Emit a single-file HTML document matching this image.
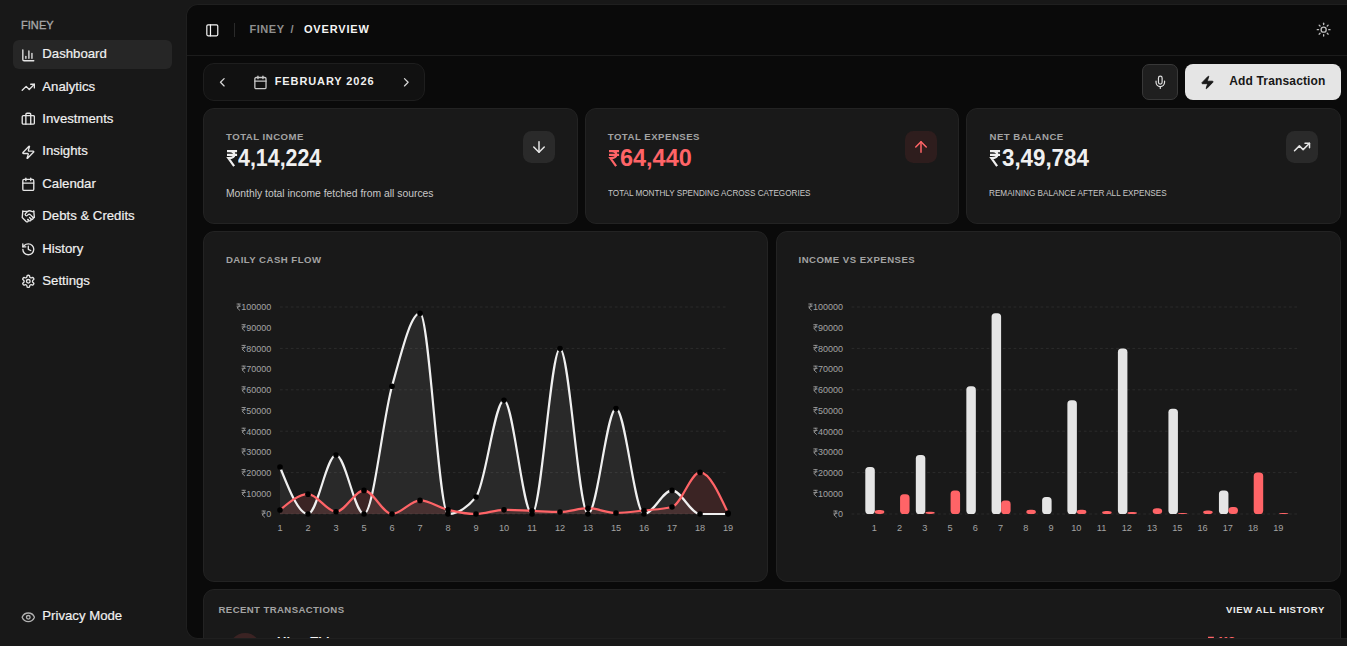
<!DOCTYPE html>
<html><head><meta charset="utf-8"><title>Finey</title>
<style>
*{margin:0;padding:0;box-sizing:border-box}
html,body{width:1347px;height:646px;overflow:hidden;background:#181818;font-family:"Liberation Sans", sans-serif}
.t{position:absolute;white-space:nowrap}
.ic{position:absolute;display:block}
.box{position:absolute}
.card{position:absolute;background:#191919;border:1px solid #232323;border-radius:11px}
#main{position:absolute;left:186px;top:4px;width:1162px;height:635px;background:#0a0a0a;border:1px solid #1f1f1f;border-right:none;border-radius:12px 0 0 12px;overflow:hidden}
#inner{position:absolute;left:1px;top:1px;width:1160px;height:633px}
.charts{position:absolute;left:0;top:0}
</style></head><body>
<div class="t" style="left:20.90px;top:19.89px;font-size:11px;line-height:11px;color:#a8a8a8;font-weight:400;letter-spacing:0.1px;-webkit-text-stroke:0.35px #a8a8a8;">FINEY</div><div class="box" style="left:13px;top:40px;width:159px;height:29px;border-radius:6px;background:#262626"></div><svg class="ic" style="left:20.70px;top:47.60px" width="14.6" height="14.6" viewBox="0 0 24 24" fill="none" stroke="#e5e5e5" stroke-width="2.2" stroke-linecap="round" stroke-linejoin="round"><path d="M3 3v16a2 2 0 0 0 2 2h16"/><path d="M18 17V9"/><path d="M13 17V5"/><path d="M8 17v-3"/></svg><div class="t" style="left:42.30px;top:47.43px;font-size:13.2px;line-height:13.2px;color:#f0f0f0;font-weight:400;letter-spacing:0px;-webkit-text-stroke:0.2px #f0f0f0;">Dashboard</div><svg class="ic" style="left:20.70px;top:79.95px" width="14.6" height="14.6" viewBox="0 0 24 24" fill="none" stroke="#e5e5e5" stroke-width="2.2" stroke-linecap="round" stroke-linejoin="round"><polyline points="22 7 13.5 15.5 8.5 10.5 2 17"/><polyline points="16 7 22 7 22 13"/></svg><div class="t" style="left:42.30px;top:79.78px;font-size:13.2px;line-height:13.2px;color:#f0f0f0;font-weight:400;letter-spacing:0px;-webkit-text-stroke:0.2px #f0f0f0;">Analytics</div><svg class="ic" style="left:20.70px;top:112.30px" width="14.6" height="14.6" viewBox="0 0 24 24" fill="none" stroke="#e5e5e5" stroke-width="2.2" stroke-linecap="round" stroke-linejoin="round"><path d="M16 20V4a2 2 0 0 0-2-2h-4a2 2 0 0 0-2 2v16"/><rect width="20" height="14" x="2" y="6" rx="2"/></svg><div class="t" style="left:42.30px;top:112.13px;font-size:13.2px;line-height:13.2px;color:#f0f0f0;font-weight:400;letter-spacing:0px;-webkit-text-stroke:0.2px #f0f0f0;">Investments</div><svg class="ic" style="left:20.70px;top:144.65px" width="14.6" height="14.6" viewBox="0 0 24 24" fill="none" stroke="#e5e5e5" stroke-width="2.2" stroke-linecap="round" stroke-linejoin="round"><path d="M4 14a1 1 0 0 1-.78-1.63l9.9-10.2a.5.5 0 0 1 .86.46l-1.92 6.02A1 1 0 0 0 13 10h7a1 1 0 0 1 .78 1.63l-9.9 10.2a.5.5 0 0 1-.86-.46l1.92-6.02A1 1 0 0 0 11 14z"/></svg><div class="t" style="left:42.30px;top:144.48px;font-size:13.2px;line-height:13.2px;color:#f0f0f0;font-weight:400;letter-spacing:0px;-webkit-text-stroke:0.2px #f0f0f0;">Insights</div><svg class="ic" style="left:20.70px;top:177.00px" width="14.6" height="14.6" viewBox="0 0 24 24" fill="none" stroke="#e5e5e5" stroke-width="2.2" stroke-linecap="round" stroke-linejoin="round"><path d="M8 2v4"/><path d="M16 2v4"/><rect width="18" height="18" x="3" y="4" rx="2"/><path d="M3 10h18"/></svg><div class="t" style="left:42.30px;top:176.83px;font-size:13.2px;line-height:13.2px;color:#f0f0f0;font-weight:400;letter-spacing:0px;-webkit-text-stroke:0.2px #f0f0f0;">Calendar</div><svg class="ic" style="left:20.70px;top:209.35px" width="14.6" height="14.6" viewBox="0 0 24 24" fill="none" stroke="#e5e5e5" stroke-width="2.2" stroke-linecap="round" stroke-linejoin="round"><path d="m11 17 2 2a1 1 0 1 0 3-3"/><path d="m14 14 2.5 2.5a1 1 0 1 0 3-3l-3.88-3.88a3 3 0 0 0-4.24 0l-.88.88a1 1 0 1 1-3-3l2.81-2.81a5.79 5.79 0 0 1 7.06-.87l.47.28a2 2 0 0 0 1.42.25L21 4"/><path d="m21 3 1 11h-2"/><path d="M3 3 2 14l6.47 6.47a1 1 0 0 0 3-3"/><path d="M3 4h8"/></svg><div class="t" style="left:42.30px;top:209.18px;font-size:13.2px;line-height:13.2px;color:#f0f0f0;font-weight:400;letter-spacing:0px;-webkit-text-stroke:0.2px #f0f0f0;">Debts &amp; Credits</div><svg class="ic" style="left:20.70px;top:241.70px" width="14.6" height="14.6" viewBox="0 0 24 24" fill="none" stroke="#e5e5e5" stroke-width="2.2" stroke-linecap="round" stroke-linejoin="round"><path d="M3 12a9 9 0 1 0 9-9 9.75 9.75 0 0 0-6.74 2.74L3 8"/><path d="M3 3v5h5"/><path d="M12 7v5l4 2"/></svg><div class="t" style="left:42.30px;top:241.53px;font-size:13.2px;line-height:13.2px;color:#f0f0f0;font-weight:400;letter-spacing:0px;-webkit-text-stroke:0.2px #f0f0f0;">History</div><svg class="ic" style="left:20.70px;top:274.05px" width="14.6" height="14.6" viewBox="0 0 24 24" fill="none" stroke="#e5e5e5" stroke-width="2.2" stroke-linecap="round" stroke-linejoin="round"><path d="M12.22 2h-.44a2 2 0 0 0-2 2v.18a2 2 0 0 1-1 1.73l-.43.25a2 2 0 0 1-2 0l-.15-.08a2 2 0 0 0-2.73.73l-.22.38a2 2 0 0 0 .73 2.73l.15.1a2 2 0 0 1 1 1.72v.51a2 2 0 0 1-1 1.74l-.15.09a2 2 0 0 0-.73 2.73l.22.38a2 2 0 0 0 2.73.73l.15-.08a2 2 0 0 1 2 0l.43.25a2 2 0 0 1 1 1.73V20a2 2 0 0 0 2 2h.44a2 2 0 0 0 2-2v-.18a2 2 0 0 1 1-1.73l.43-.25a2 2 0 0 1 2 0l.15.08a2 2 0 0 0 2.73-.73l.22-.39a2 2 0 0 0-.73-2.73l-.15-.08a2 2 0 0 1-1-1.74v-.5a2 2 0 0 1 1-1.74l.15-.09a2 2 0 0 0 .73-2.73l-.22-.38a2 2 0 0 0-2.73-.73l-.15.08a2 2 0 0 1-2 0l-.43-.25a2 2 0 0 1-1-1.73V4a2 2 0 0 0-2-2z"/><circle cx="12" cy="12" r="3"/></svg><div class="t" style="left:42.30px;top:273.88px;font-size:13.2px;line-height:13.2px;color:#f0f0f0;font-weight:400;letter-spacing:0px;-webkit-text-stroke:0.2px #f0f0f0;">Settings</div><svg class="ic" style="left:20.70px;top:609.60px" width="14.6" height="14.6" viewBox="0 0 24 24" fill="none" stroke="#b0b0b0" stroke-width="2.2" stroke-linecap="round" stroke-linejoin="round"><path d="M2.062 12.348a1 1 0 0 1 0-.696 10.75 10.75 0 0 1 19.876 0 1 1 0 0 1 0 .696 10.75 10.75 0 0 1-19.876 0"/><circle cx="12" cy="12" r="3"/></svg><div class="t" style="left:42.30px;top:609.43px;font-size:13.2px;line-height:13.2px;color:#f0f0f0;font-weight:400;letter-spacing:0px;-webkit-text-stroke:0.2px #f0f0f0;">Privacy Mode</div>
<div id="main"><div id="inner" style="left:0;top:0">
<svg class="ic" style="left:17.70px;top:17.55px" width="14.6" height="14.6" viewBox="0 0 24 24" fill="none" stroke="#f5f5f5" stroke-width="2" stroke-linecap="round" stroke-linejoin="round"><rect width="18" height="18" x="3" y="3" rx="2"/><path d="M9 3v18"/></svg><div class="box" style="left:47px;top:18px;width:1px;height:14px;background:#2a2a2a"></div><div class="t" style="left:62.40px;top:18.69px;font-size:11px;line-height:11px;color:#8f8f8f;font-weight:700;letter-spacing:0.55px;">FINEY</div><div class="t" style="left:103.40px;top:18.69px;font-size:11px;line-height:11px;color:#8f8f8f;font-weight:700;letter-spacing:0px;">/</div><div class="t" style="left:116.90px;top:18.69px;font-size:11px;line-height:11px;color:#f5f5f5;font-weight:700;letter-spacing:0.85px;">OVERVIEW</div><svg class="ic" style="left:1129.45px;top:17.45px" width="15.3" height="15.3" viewBox="0 0 24 24" fill="none" stroke="#bdbdbd" stroke-width="2.1" stroke-linecap="round" stroke-linejoin="round"><circle cx="12" cy="12" r="4"/><path d="M12 2v2"/><path d="M12 20v2"/><path d="m4.93 4.93 1.41 1.41"/><path d="m17.66 17.66 1.41 1.41"/><path d="M2 12h2"/><path d="M20 12h2"/><path d="m6.34 17.66-1.41 1.41"/><path d="m19.07 4.93-1.41 1.41"/></svg><div class="box" style="left:0;top:50px;width:1160px;height:1px;background:#1c1c1c"></div><div class="box" style="left:16px;top:58px;width:222px;height:38px;border-radius:11px;background:#111111;border:1px solid #1e1e1e;box-sizing:border-box"></div><svg class="ic" style="left:28.00px;top:70.10px" width="14.6" height="14.6" viewBox="0 0 24 24" fill="none" stroke="#d4d4d4" stroke-width="2.1" stroke-linecap="round" stroke-linejoin="round"><path d="m15 18-6-6 6-6"/></svg><svg class="ic" style="left:65.55px;top:69.75px" width="14.9" height="14.9" viewBox="0 0 24 24" fill="none" stroke="#c8c8c8" stroke-width="2.1" stroke-linecap="round" stroke-linejoin="round"><path d="M8 2v4"/><path d="M16 2v4"/><rect width="18" height="18" x="3" y="4" rx="2"/><path d="M3 10h18"/></svg><div class="t" style="left:87.70px;top:70.89px;font-size:11px;line-height:11px;color:#f0f0f0;font-weight:700;letter-spacing:0.9px;">FEBRUARY 2026</div><svg class="ic" style="left:212.10px;top:70.40px" width="14.6" height="14.6" viewBox="0 0 24 24" fill="none" stroke="#d4d4d4" stroke-width="2.1" stroke-linecap="round" stroke-linejoin="round"><path d="m9 18 6-6-6-6"/></svg><div class="box" style="left:955px;top:59px;width:36px;height:36px;border-radius:7px;background:#1f1f1f;border:1px solid #383838;box-sizing:border-box"></div><svg class="ic" style="left:966.00px;top:70.20px" width="14.6" height="14.6" viewBox="0 0 24 24" fill="none" stroke="#e0e0e0" stroke-width="2" stroke-linecap="round" stroke-linejoin="round"><path d="M12 19v3"/><path d="M19 10v2a7 7 0 0 1-14 0v-2"/><rect x="9" y="2" width="6" height="13" rx="3"/></svg><div class="box" style="left:998px;top:59px;width:156px;height:36px;border-radius:8px;background:#e5e5e5"></div><svg class="ic" style="left:1012.65px;top:70.05px" width="14.9" height="14.9" viewBox="0 0 24 24" fill="#1a1a1a" stroke="#1a1a1a" stroke-width="1.5" stroke-linecap="round" stroke-linejoin="round"><path d="M4 14a1 1 0 0 1-.78-1.63l9.9-10.2a.5.5 0 0 1 .86.46l-1.92 6.02A1 1 0 0 0 13 10h7a1 1 0 0 1 .78 1.63l-9.9 10.2a.5.5 0 0 1-.86-.46l1.92-6.02A1 1 0 0 0 11 14z"/></svg><div class="t" style="left:1042.30px;top:69.74px;font-size:12px;line-height:12px;color:#171717;font-weight:700;letter-spacing:0.15px;">Add Transaction</div><div class="card" style="left:16.00px;top:103.2px;width:374.53px;height:116px"></div><div class="t" style="left:39.00px;top:126.67px;font-size:9.6px;line-height:9.6px;color:#a3a3a3;font-weight:700;letter-spacing:0.5px;">TOTAL INCOME</div><svg class="ic" style="left:39.80px;top:144.60px;overflow:visible" width="10.08" height="16.30" viewBox="0 0 10.2 16.5"><path d="M0 1.1H10.2M0 4.9H10.2M3 1.1C6.6 1.1 7.4 3 7.4 4.9C7.4 7 5.6 8.3 1.4 8.3L7.2 16.3" fill="none" stroke="#f0f0f0" stroke-width="2.23" stroke-linecap="butt" stroke-linejoin="miter"/></svg><div class="t" style="left:51.10px;top:141.83px;font-size:23px;line-height:23px;color:#f0f0f0;font-weight:700;letter-spacing:0px;transform:scaleX(0.93);transform-origin:0 0;">4,14,224</div><div class="t" style="left:39.00px;top:183.09px;font-size:11px;line-height:11px;color:#c8c8c8;font-weight:400;letter-spacing:0px;transform:scaleX(0.94);transform-origin:0 0;">Monthly total income fetched from all sources</div><div class="box" style="left:335.83px;top:125.9px;width:32.2px;height:32.2px;border-radius:8.5px;background:#2a2a2a"></div><svg class="ic" style="left:342.93px;top:133.00px" width="18" height="18" viewBox="0 0 24 24" fill="none" stroke="#e5e5e5" stroke-width="2" stroke-linecap="round" stroke-linejoin="round"><path d="M12 5v14"/><path d="m19 12-7 7-7-7"/></svg><div class="card" style="left:397.73px;top:103.2px;width:374.53px;height:116px"></div><div class="t" style="left:420.73px;top:126.67px;font-size:9.6px;line-height:9.6px;color:#a3a3a3;font-weight:700;letter-spacing:0.5px;">TOTAL EXPENSES</div><svg class="ic" style="left:421.53px;top:144.60px;overflow:visible" width="10.08" height="16.30" viewBox="0 0 10.2 16.5"><path d="M0 1.1H10.2M0 4.9H10.2M3 1.1C6.6 1.1 7.4 3 7.4 4.9C7.4 7 5.6 8.3 1.4 8.3L7.2 16.3" fill="none" stroke="#ff6467" stroke-width="2.23" stroke-linecap="butt" stroke-linejoin="miter"/></svg><div class="t" style="left:432.83px;top:141.83px;font-size:23px;line-height:23px;color:#ff6467;font-weight:700;letter-spacing:0px;transform:scaleX(1.02);transform-origin:0 0;">64,440</div><div class="t" style="left:420.73px;top:183.30px;font-size:9.8px;line-height:9.8px;color:#c8c8c8;font-weight:400;letter-spacing:0px;transform:scaleX(0.831);transform-origin:0 0;">TOTAL MONTHLY SPENDING ACROSS CATEGORIES</div><div class="box" style="left:717.57px;top:125.9px;width:32.2px;height:32.2px;border-radius:8.5px;background:#2e1d1d"></div><svg class="ic" style="left:724.67px;top:133.00px" width="18" height="18" viewBox="0 0 24 24" fill="none" stroke="#ff6467" stroke-width="2" stroke-linecap="round" stroke-linejoin="round"><path d="m5 12 7-7 7 7"/><path d="M12 19V5"/></svg><div class="card" style="left:779.47px;top:103.2px;width:374.53px;height:116px"></div><div class="t" style="left:802.47px;top:126.67px;font-size:9.6px;line-height:9.6px;color:#a3a3a3;font-weight:700;letter-spacing:0.5px;">NET BALANCE</div><svg class="ic" style="left:803.27px;top:144.60px;overflow:visible" width="10.08" height="16.30" viewBox="0 0 10.2 16.5"><path d="M0 1.1H10.2M0 4.9H10.2M3 1.1C6.6 1.1 7.4 3 7.4 4.9C7.4 7 5.6 8.3 1.4 8.3L7.2 16.3" fill="none" stroke="#f0f0f0" stroke-width="2.23" stroke-linecap="butt" stroke-linejoin="miter"/></svg><div class="t" style="left:814.57px;top:141.83px;font-size:23px;line-height:23px;color:#f0f0f0;font-weight:700;letter-spacing:0px;transform:scaleX(0.97);transform-origin:0 0;">3,49,784</div><div class="t" style="left:802.47px;top:183.30px;font-size:9.8px;line-height:9.8px;color:#c8c8c8;font-weight:400;letter-spacing:0px;transform:scaleX(0.834);transform-origin:0 0;">REMAINING BALANCE AFTER ALL EXPENSES</div><div class="box" style="left:1099.30px;top:125.9px;width:32.2px;height:32.2px;border-radius:8.5px;background:#2a2a2a"></div><svg class="ic" style="left:1106.40px;top:133.00px" width="18" height="18" viewBox="0 0 24 24" fill="none" stroke="#e5e5e5" stroke-width="2" stroke-linecap="round" stroke-linejoin="round"><polyline points="22 7 13.5 15.5 8.5 10.5 2 17"/><polyline points="16 7 22 7 22 13"/></svg><div class="card" style="left:16.00px;top:225.9px;width:565.40px;height:351px"></div><div class="t" style="left:38.90px;top:249.67px;font-size:9.6px;line-height:9.6px;color:#a3a3a3;font-weight:700;letter-spacing:0.47px;">DAILY CASH FLOW</div><div class="card" style="left:588.60px;top:225.9px;width:565.40px;height:351px"></div><div class="t" style="left:611.50px;top:249.67px;font-size:9.6px;line-height:9.6px;color:#a3a3a3;font-weight:700;letter-spacing:0.47px;">INCOME VS EXPENSES</div><div class="card" style="left:16px;top:584.1px;width:1138px;height:80px"></div><div class="t" style="left:31.50px;top:600.37px;font-size:9.6px;line-height:9.6px;color:#a3a3a3;font-weight:700;letter-spacing:0.4px;">RECENT TRANSACTIONS</div><div class="t" style="left:1039.10px;top:600.47px;font-size:9.6px;line-height:9.6px;color:#ececec;font-weight:700;letter-spacing:0.54px;">VIEW ALL HISTORY</div><div class="box" style="left:42px;top:627.8px;width:32px;height:32px;border-radius:50%;background:#3b2323"></div><div class="t" style="left:90.00px;top:630.30px;font-size:13px;line-height:13px;color:#f5f5f5;font-weight:700;letter-spacing:0px;">Uber Thin</div><svg class="ic" style="left:1021.00px;top:631.80px;overflow:visible" width="5.87" height="9.50" viewBox="0 0 10.2 16.5"><path d="M0 1.1H10.2M0 4.9H10.2M3 1.1C6.6 1.1 7.4 3 7.4 4.9C7.4 7 5.6 8.3 1.4 8.3L7.2 16.3" fill="none" stroke="#ff6467" stroke-width="2.78" stroke-linecap="butt" stroke-linejoin="miter"/></svg><div class="t" style="left:1030.60px;top:630.67px;font-size:11.5px;line-height:11.5px;color:#ff6467;font-weight:700;letter-spacing:-0.6px;">118</div>
</div></div>
<svg class="charts" width="1347" height="646" viewBox="0 0 1347 646" style="font-family:"Liberation Sans", sans-serif"><line x1="280" x2="728" y1="514.00" y2="514.00" stroke="#2e2e2e" stroke-dasharray="2.7 2.7" stroke-width="0.9"/><line x1="280" x2="728" y1="472.60" y2="472.60" stroke="#2e2e2e" stroke-dasharray="2.7 2.7" stroke-width="0.9"/><line x1="280" x2="728" y1="431.20" y2="431.20" stroke="#2e2e2e" stroke-dasharray="2.7 2.7" stroke-width="0.9"/><line x1="280" x2="728" y1="389.80" y2="389.80" stroke="#2e2e2e" stroke-dasharray="2.7 2.7" stroke-width="0.9"/><line x1="280" x2="728" y1="348.40" y2="348.40" stroke="#2e2e2e" stroke-dasharray="2.7 2.7" stroke-width="0.9"/><line x1="280" x2="728" y1="307.00" y2="307.00" stroke="#2e2e2e" stroke-dasharray="2.7 2.7" stroke-width="0.9"/><text x="271.2" y="517.30" text-anchor="end" font-size="9" fill="#a3a3a3">0</text><path transform="translate(261.60,510.50)" d="M0 0.5H4.2M0 2.7H4.2M1.6 0.5C3.3 0.5 3.3 4.2 0.4 4.2L3.4 7" fill="none" stroke="#a3a3a3" stroke-width="0.85"/><text x="271.2" y="496.60" text-anchor="end" font-size="9" fill="#a3a3a3">10000</text><path transform="translate(241.58,489.80)" d="M0 0.5H4.2M0 2.7H4.2M1.6 0.5C3.3 0.5 3.3 4.2 0.4 4.2L3.4 7" fill="none" stroke="#a3a3a3" stroke-width="0.85"/><text x="271.2" y="475.90" text-anchor="end" font-size="9" fill="#a3a3a3">20000</text><path transform="translate(241.58,469.10)" d="M0 0.5H4.2M0 2.7H4.2M1.6 0.5C3.3 0.5 3.3 4.2 0.4 4.2L3.4 7" fill="none" stroke="#a3a3a3" stroke-width="0.85"/><text x="271.2" y="455.20" text-anchor="end" font-size="9" fill="#a3a3a3">30000</text><path transform="translate(241.58,448.40)" d="M0 0.5H4.2M0 2.7H4.2M1.6 0.5C3.3 0.5 3.3 4.2 0.4 4.2L3.4 7" fill="none" stroke="#a3a3a3" stroke-width="0.85"/><text x="271.2" y="434.50" text-anchor="end" font-size="9" fill="#a3a3a3">40000</text><path transform="translate(241.58,427.70)" d="M0 0.5H4.2M0 2.7H4.2M1.6 0.5C3.3 0.5 3.3 4.2 0.4 4.2L3.4 7" fill="none" stroke="#a3a3a3" stroke-width="0.85"/><text x="271.2" y="413.80" text-anchor="end" font-size="9" fill="#a3a3a3">50000</text><path transform="translate(241.58,407.00)" d="M0 0.5H4.2M0 2.7H4.2M1.6 0.5C3.3 0.5 3.3 4.2 0.4 4.2L3.4 7" fill="none" stroke="#a3a3a3" stroke-width="0.85"/><text x="271.2" y="393.10" text-anchor="end" font-size="9" fill="#a3a3a3">60000</text><path transform="translate(241.58,386.30)" d="M0 0.5H4.2M0 2.7H4.2M1.6 0.5C3.3 0.5 3.3 4.2 0.4 4.2L3.4 7" fill="none" stroke="#a3a3a3" stroke-width="0.85"/><text x="271.2" y="372.40" text-anchor="end" font-size="9" fill="#a3a3a3">70000</text><path transform="translate(241.58,365.60)" d="M0 0.5H4.2M0 2.7H4.2M1.6 0.5C3.3 0.5 3.3 4.2 0.4 4.2L3.4 7" fill="none" stroke="#a3a3a3" stroke-width="0.85"/><text x="271.2" y="351.70" text-anchor="end" font-size="9" fill="#a3a3a3">80000</text><path transform="translate(241.58,344.90)" d="M0 0.5H4.2M0 2.7H4.2M1.6 0.5C3.3 0.5 3.3 4.2 0.4 4.2L3.4 7" fill="none" stroke="#a3a3a3" stroke-width="0.85"/><text x="271.2" y="331.00" text-anchor="end" font-size="9" fill="#a3a3a3">90000</text><path transform="translate(241.58,324.20)" d="M0 0.5H4.2M0 2.7H4.2M1.6 0.5C3.3 0.5 3.3 4.2 0.4 4.2L3.4 7" fill="none" stroke="#a3a3a3" stroke-width="0.85"/><text x="271.2" y="310.30" text-anchor="end" font-size="9" fill="#a3a3a3">100000</text><path transform="translate(236.58,303.50)" d="M0 0.5H4.2M0 2.7H4.2M1.6 0.5C3.3 0.5 3.3 4.2 0.4 4.2L3.4 7" fill="none" stroke="#a3a3a3" stroke-width="0.85"/><text x="280" y="530.6" text-anchor="middle" font-size="9.2" fill="#a3a3a3">1</text><text x="308" y="530.6" text-anchor="middle" font-size="9.2" fill="#a3a3a3">2</text><text x="336" y="530.6" text-anchor="middle" font-size="9.2" fill="#a3a3a3">3</text><text x="364" y="530.6" text-anchor="middle" font-size="9.2" fill="#a3a3a3">5</text><text x="392" y="530.6" text-anchor="middle" font-size="9.2" fill="#a3a3a3">6</text><text x="420" y="530.6" text-anchor="middle" font-size="9.2" fill="#a3a3a3">7</text><text x="448" y="530.6" text-anchor="middle" font-size="9.2" fill="#a3a3a3">8</text><text x="476" y="530.6" text-anchor="middle" font-size="9.2" fill="#a3a3a3">9</text><text x="504" y="530.6" text-anchor="middle" font-size="9.2" fill="#a3a3a3">10</text><text x="532" y="530.6" text-anchor="middle" font-size="9.2" fill="#a3a3a3">11</text><text x="560" y="530.6" text-anchor="middle" font-size="9.2" fill="#a3a3a3">12</text><text x="588" y="530.6" text-anchor="middle" font-size="9.2" fill="#a3a3a3">13</text><text x="616" y="530.6" text-anchor="middle" font-size="9.2" fill="#a3a3a3">15</text><text x="644" y="530.6" text-anchor="middle" font-size="9.2" fill="#a3a3a3">16</text><text x="672" y="530.6" text-anchor="middle" font-size="9.2" fill="#a3a3a3">17</text><text x="700" y="530.6" text-anchor="middle" font-size="9.2" fill="#a3a3a3">18</text><text x="728" y="530.6" text-anchor="middle" font-size="9.2" fill="#a3a3a3">19</text><path d="M280.00,467.01 C289.33,490.51 298.67,514.00 308.00,514.00 C317.33,514.00 326.67,455.00 336.00,455.00 C345.33,455.00 354.67,514.00 364.00,514.00 C373.33,514.00 382.67,419.75 392.00,386.28 C401.33,352.82 410.67,313.21 420.00,313.21 C429.33,313.21 438.67,514.00 448.00,514.00 C457.33,514.00 466.67,508.34 476.00,497.03 C485.33,485.71 494.67,400.36 504.00,400.36 C513.33,400.36 522.67,514.00 532.00,514.00 C541.33,514.00 550.67,348.61 560.00,348.61 C569.33,348.61 578.67,514.00 588.00,514.00 C597.33,514.00 606.67,408.64 616.00,408.64 C625.33,408.64 634.67,514.00 644.00,514.00 C653.33,514.00 662.67,490.40 672.00,490.40 C681.33,490.40 690.67,514.00 700.00,514.00 C709.33,514.00 718.67,514.00 728.00,514.00 L728,514 L280,514 Z" fill="#ffffff" fill-opacity="0.07"/><path d="M280.00,510.07 C289.33,502.10 298.67,494.13 308.00,494.13 C317.33,494.13 326.67,511.72 336.00,511.72 C345.33,511.72 354.67,490.40 364.00,490.40 C373.33,490.40 382.67,514.00 392.00,514.00 C401.33,514.00 410.67,500.40 420.00,500.40 C429.33,500.40 438.67,507.59 448.00,509.86 C457.33,512.13 466.67,514.00 476.00,514.00 C485.33,514.00 494.67,509.86 504.00,509.86 C513.33,509.86 522.67,510.55 532.00,510.89 C541.33,511.24 550.67,511.93 560.00,511.93 C569.33,511.93 578.67,508.20 588.00,508.20 C597.33,508.20 606.67,512.97 616.00,512.97 C625.33,512.97 634.67,511.48 644.00,510.48 C653.33,509.48 662.67,509.31 672.00,506.96 C681.33,504.62 690.67,472.39 700.00,472.39 C709.33,472.39 718.67,492.68 728.00,512.97 L728,514 L280,514 Z" fill="#ff6467" fill-opacity="0.15"/><path d="M280.00,467.01 C289.33,490.51 298.67,514.00 308.00,514.00 C317.33,514.00 326.67,455.00 336.00,455.00 C345.33,455.00 354.67,514.00 364.00,514.00 C373.33,514.00 382.67,419.75 392.00,386.28 C401.33,352.82 410.67,313.21 420.00,313.21 C429.33,313.21 438.67,514.00 448.00,514.00 C457.33,514.00 466.67,508.34 476.00,497.03 C485.33,485.71 494.67,400.36 504.00,400.36 C513.33,400.36 522.67,514.00 532.00,514.00 C541.33,514.00 550.67,348.61 560.00,348.61 C569.33,348.61 578.67,514.00 588.00,514.00 C597.33,514.00 606.67,408.64 616.00,408.64 C625.33,408.64 634.67,514.00 644.00,514.00 C653.33,514.00 662.67,490.40 672.00,490.40 C681.33,490.40 690.67,514.00 700.00,514.00 C709.33,514.00 718.67,514.00 728.00,514.00" fill="none" stroke="#f0f0f0" stroke-width="2.2"/><path d="M280.00,510.07 C289.33,502.10 298.67,494.13 308.00,494.13 C317.33,494.13 326.67,511.72 336.00,511.72 C345.33,511.72 354.67,490.40 364.00,490.40 C373.33,490.40 382.67,514.00 392.00,514.00 C401.33,514.00 410.67,500.40 420.00,500.40 C429.33,500.40 438.67,507.59 448.00,509.86 C457.33,512.13 466.67,514.00 476.00,514.00 C485.33,514.00 494.67,509.86 504.00,509.86 C513.33,509.86 522.67,510.55 532.00,510.89 C541.33,511.24 550.67,511.93 560.00,511.93 C569.33,511.93 578.67,508.20 588.00,508.20 C597.33,508.20 606.67,512.97 616.00,512.97 C625.33,512.97 634.67,511.48 644.00,510.48 C653.33,509.48 662.67,509.31 672.00,506.96 C681.33,504.62 690.67,472.39 700.00,472.39 C709.33,472.39 718.67,492.68 728.00,512.97" fill="none" stroke="#ff6467" stroke-width="2.2"/><circle cx="280" cy="467.01" r="2.8" fill="#000"/><circle cx="308" cy="514.00" r="2.8" fill="#000"/><circle cx="336" cy="455.00" r="2.8" fill="#000"/><circle cx="364" cy="514.00" r="2.8" fill="#000"/><circle cx="392" cy="386.28" r="2.8" fill="#000"/><circle cx="420" cy="313.21" r="2.8" fill="#000"/><circle cx="448" cy="514.00" r="2.8" fill="#000"/><circle cx="476" cy="497.03" r="2.8" fill="#000"/><circle cx="504" cy="400.36" r="2.8" fill="#000"/><circle cx="532" cy="514.00" r="2.8" fill="#000"/><circle cx="560" cy="348.61" r="2.8" fill="#000"/><circle cx="588" cy="514.00" r="2.8" fill="#000"/><circle cx="616" cy="408.64" r="2.8" fill="#000"/><circle cx="644" cy="514.00" r="2.8" fill="#000"/><circle cx="672" cy="490.40" r="2.8" fill="#000"/><circle cx="700" cy="514.00" r="2.8" fill="#000"/><circle cx="728" cy="514.00" r="2.8" fill="#000"/><circle cx="280" cy="510.07" r="2.8" fill="#000"/><circle cx="308" cy="494.13" r="2.8" fill="#000"/><circle cx="336" cy="511.72" r="2.8" fill="#000"/><circle cx="364" cy="490.40" r="2.8" fill="#000"/><circle cx="392" cy="514.00" r="2.8" fill="#000"/><circle cx="420" cy="500.40" r="2.8" fill="#000"/><circle cx="448" cy="509.86" r="2.8" fill="#000"/><circle cx="476" cy="514.00" r="2.8" fill="#000"/><circle cx="504" cy="509.86" r="2.8" fill="#000"/><circle cx="532" cy="510.89" r="2.8" fill="#000"/><circle cx="560" cy="511.93" r="2.8" fill="#000"/><circle cx="588" cy="508.20" r="2.8" fill="#000"/><circle cx="616" cy="512.97" r="2.8" fill="#000"/><circle cx="644" cy="510.48" r="2.8" fill="#000"/><circle cx="672" cy="506.96" r="2.8" fill="#000"/><circle cx="700" cy="472.39" r="2.8" fill="#000"/><circle cx="728" cy="512.97" r="2.8" fill="#000"/><line x1="851.6" x2="1297.5" y1="514.00" y2="514.00" stroke="#2e2e2e" stroke-dasharray="2.7 2.7" stroke-width="0.9"/><line x1="851.6" x2="1297.5" y1="472.60" y2="472.60" stroke="#2e2e2e" stroke-dasharray="2.7 2.7" stroke-width="0.9"/><line x1="851.6" x2="1297.5" y1="431.20" y2="431.20" stroke="#2e2e2e" stroke-dasharray="2.7 2.7" stroke-width="0.9"/><line x1="851.6" x2="1297.5" y1="389.80" y2="389.80" stroke="#2e2e2e" stroke-dasharray="2.7 2.7" stroke-width="0.9"/><line x1="851.6" x2="1297.5" y1="348.40" y2="348.40" stroke="#2e2e2e" stroke-dasharray="2.7 2.7" stroke-width="0.9"/><line x1="851.6" x2="1297.5" y1="307.00" y2="307.00" stroke="#2e2e2e" stroke-dasharray="2.7 2.7" stroke-width="0.9"/><text x="843" y="517.30" text-anchor="end" font-size="9" fill="#a3a3a3">0</text><path transform="translate(833.40,510.50)" d="M0 0.5H4.2M0 2.7H4.2M1.6 0.5C3.3 0.5 3.3 4.2 0.4 4.2L3.4 7" fill="none" stroke="#a3a3a3" stroke-width="0.85"/><text x="843" y="496.60" text-anchor="end" font-size="9" fill="#a3a3a3">10000</text><path transform="translate(813.38,489.80)" d="M0 0.5H4.2M0 2.7H4.2M1.6 0.5C3.3 0.5 3.3 4.2 0.4 4.2L3.4 7" fill="none" stroke="#a3a3a3" stroke-width="0.85"/><text x="843" y="475.90" text-anchor="end" font-size="9" fill="#a3a3a3">20000</text><path transform="translate(813.38,469.10)" d="M0 0.5H4.2M0 2.7H4.2M1.6 0.5C3.3 0.5 3.3 4.2 0.4 4.2L3.4 7" fill="none" stroke="#a3a3a3" stroke-width="0.85"/><text x="843" y="455.20" text-anchor="end" font-size="9" fill="#a3a3a3">30000</text><path transform="translate(813.38,448.40)" d="M0 0.5H4.2M0 2.7H4.2M1.6 0.5C3.3 0.5 3.3 4.2 0.4 4.2L3.4 7" fill="none" stroke="#a3a3a3" stroke-width="0.85"/><text x="843" y="434.50" text-anchor="end" font-size="9" fill="#a3a3a3">40000</text><path transform="translate(813.38,427.70)" d="M0 0.5H4.2M0 2.7H4.2M1.6 0.5C3.3 0.5 3.3 4.2 0.4 4.2L3.4 7" fill="none" stroke="#a3a3a3" stroke-width="0.85"/><text x="843" y="413.80" text-anchor="end" font-size="9" fill="#a3a3a3">50000</text><path transform="translate(813.38,407.00)" d="M0 0.5H4.2M0 2.7H4.2M1.6 0.5C3.3 0.5 3.3 4.2 0.4 4.2L3.4 7" fill="none" stroke="#a3a3a3" stroke-width="0.85"/><text x="843" y="393.10" text-anchor="end" font-size="9" fill="#a3a3a3">60000</text><path transform="translate(813.38,386.30)" d="M0 0.5H4.2M0 2.7H4.2M1.6 0.5C3.3 0.5 3.3 4.2 0.4 4.2L3.4 7" fill="none" stroke="#a3a3a3" stroke-width="0.85"/><text x="843" y="372.40" text-anchor="end" font-size="9" fill="#a3a3a3">70000</text><path transform="translate(813.38,365.60)" d="M0 0.5H4.2M0 2.7H4.2M1.6 0.5C3.3 0.5 3.3 4.2 0.4 4.2L3.4 7" fill="none" stroke="#a3a3a3" stroke-width="0.85"/><text x="843" y="351.70" text-anchor="end" font-size="9" fill="#a3a3a3">80000</text><path transform="translate(813.38,344.90)" d="M0 0.5H4.2M0 2.7H4.2M1.6 0.5C3.3 0.5 3.3 4.2 0.4 4.2L3.4 7" fill="none" stroke="#a3a3a3" stroke-width="0.85"/><text x="843" y="331.00" text-anchor="end" font-size="9" fill="#a3a3a3">90000</text><path transform="translate(813.38,324.20)" d="M0 0.5H4.2M0 2.7H4.2M1.6 0.5C3.3 0.5 3.3 4.2 0.4 4.2L3.4 7" fill="none" stroke="#a3a3a3" stroke-width="0.85"/><text x="843" y="310.30" text-anchor="end" font-size="9" fill="#a3a3a3">100000</text><path transform="translate(808.38,303.50)" d="M0 0.5H4.2M0 2.7H4.2M1.6 0.5C3.3 0.5 3.3 4.2 0.4 4.2L3.4 7" fill="none" stroke="#a3a3a3" stroke-width="0.85"/><text x="874.20" y="530.6" text-anchor="middle" font-size="9.2" fill="#a3a3a3">1</text><text x="899.46" y="530.6" text-anchor="middle" font-size="9.2" fill="#a3a3a3">2</text><text x="924.72" y="530.6" text-anchor="middle" font-size="9.2" fill="#a3a3a3">3</text><text x="949.98" y="530.6" text-anchor="middle" font-size="9.2" fill="#a3a3a3">5</text><text x="975.24" y="530.6" text-anchor="middle" font-size="9.2" fill="#a3a3a3">6</text><text x="1000.50" y="530.6" text-anchor="middle" font-size="9.2" fill="#a3a3a3">7</text><text x="1025.76" y="530.6" text-anchor="middle" font-size="9.2" fill="#a3a3a3">8</text><text x="1051.02" y="530.6" text-anchor="middle" font-size="9.2" fill="#a3a3a3">9</text><text x="1076.28" y="530.6" text-anchor="middle" font-size="9.2" fill="#a3a3a3">10</text><text x="1101.54" y="530.6" text-anchor="middle" font-size="9.2" fill="#a3a3a3">11</text><text x="1126.80" y="530.6" text-anchor="middle" font-size="9.2" fill="#a3a3a3">12</text><text x="1152.06" y="530.6" text-anchor="middle" font-size="9.2" fill="#a3a3a3">13</text><text x="1177.32" y="530.6" text-anchor="middle" font-size="9.2" fill="#a3a3a3">15</text><text x="1202.58" y="530.6" text-anchor="middle" font-size="9.2" fill="#a3a3a3">16</text><text x="1227.84" y="530.6" text-anchor="middle" font-size="9.2" fill="#a3a3a3">17</text><text x="1253.10" y="530.6" text-anchor="middle" font-size="9.2" fill="#a3a3a3">18</text><text x="1278.36" y="530.6" text-anchor="middle" font-size="9.2" fill="#a3a3a3">19</text><rect x="865.30" y="467.01" width="9.5" height="46.99" rx="3.6" ry="3.60" fill="#e5e5e5"/><rect x="874.80" y="510.07" width="9.5" height="3.93" rx="3.6" ry="1.97" fill="#ff6467"/><rect x="900.06" y="494.13" width="9.5" height="19.87" rx="3.6" ry="3.60" fill="#ff6467"/><rect x="915.82" y="455.00" width="9.5" height="58.99" rx="3.6" ry="3.60" fill="#e5e5e5"/><rect x="925.32" y="511.72" width="9.5" height="2.28" rx="3.6" ry="1.14" fill="#ff6467"/><rect x="950.58" y="490.40" width="9.5" height="23.60" rx="3.6" ry="3.60" fill="#ff6467"/><rect x="966.34" y="386.28" width="9.5" height="127.72" rx="3.6" ry="3.60" fill="#e5e5e5"/><rect x="991.60" y="313.21" width="9.5" height="200.79" rx="3.6" ry="3.60" fill="#e5e5e5"/><rect x="1001.10" y="500.40" width="9.5" height="13.60" rx="3.6" ry="3.60" fill="#ff6467"/><rect x="1026.36" y="509.86" width="9.5" height="4.14" rx="3.6" ry="2.07" fill="#ff6467"/><rect x="1042.12" y="497.03" width="9.5" height="16.97" rx="3.6" ry="3.60" fill="#e5e5e5"/><rect x="1067.38" y="400.36" width="9.5" height="113.64" rx="3.6" ry="3.60" fill="#e5e5e5"/><rect x="1076.88" y="509.86" width="9.5" height="4.14" rx="3.6" ry="2.07" fill="#ff6467"/><rect x="1102.14" y="510.89" width="9.5" height="3.10" rx="3.6" ry="1.55" fill="#ff6467"/><rect x="1117.90" y="348.61" width="9.5" height="165.39" rx="3.6" ry="3.60" fill="#e5e5e5"/><rect x="1127.40" y="511.93" width="9.5" height="2.07" rx="3.6" ry="1.03" fill="#ff6467"/><rect x="1152.66" y="508.20" width="9.5" height="5.80" rx="3.6" ry="2.90" fill="#ff6467"/><rect x="1168.42" y="408.64" width="9.5" height="105.36" rx="3.6" ry="3.60" fill="#e5e5e5"/><rect x="1177.92" y="512.97" width="9.5" height="1.03" rx="3.6" ry="0.52" fill="#ff6467"/><rect x="1203.18" y="510.48" width="9.5" height="3.52" rx="3.6" ry="1.76" fill="#ff6467"/><rect x="1218.94" y="490.40" width="9.5" height="23.60" rx="3.6" ry="3.60" fill="#e5e5e5"/><rect x="1228.44" y="506.96" width="9.5" height="7.04" rx="3.6" ry="3.52" fill="#ff6467"/><rect x="1253.70" y="472.39" width="9.5" height="41.61" rx="3.6" ry="3.60" fill="#ff6467"/><rect x="1278.96" y="512.97" width="9.5" height="1.03" rx="3.6" ry="0.52" fill="#ff6467"/></svg>
</body></html>
